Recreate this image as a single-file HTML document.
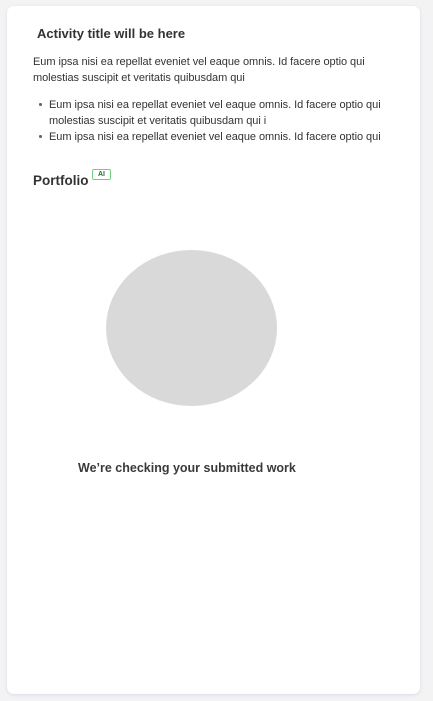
<!DOCTYPE html>
<html><head><meta charset="utf-8"><style>
html,body{margin:0;padding:0;background:#f3f3f4;width:433px;height:701px;overflow:hidden;font-family:"Liberation Sans",sans-serif;color:#333;}
.card{position:absolute;left:7px;top:6px;width:413px;height:688px;background:#fff;border-radius:7px;box-shadow:0 1px 3px rgba(150,140,200,0.25);}
.t{position:absolute;white-space:nowrap;}
.h{font-weight:bold;font-size:13px;color:#333;}
.p{font-size:11px;color:#333;letter-spacing:-0.05px;}
.dot{position:absolute;width:2.5px;height:2.5px;border-radius:50%;background:#666;}
</style></head><body>
<div class="card"></div>
<div class="t h" style="left:37px;top:26px;">Activity title will be here</div>
<div class="t p" style="left:33px;top:56px;">Eum ipsa nisi ea repellat eveniet vel eaque omnis. Id facere optio qui</div>
<div class="t p" style="left:33px;top:72px;">molestias suscipit et veritatis quibusdam qui</div>
<div class="dot" style="left:39px;top:103px;"></div>
<div class="t p" style="left:49px;top:99px;">Eum ipsa nisi ea repellat eveniet vel eaque omnis. Id facere optio qui</div>
<div class="t p" style="left:49px;top:115px;">molestias suscipit et veritatis quibusdam qui i</div>
<div class="dot" style="left:39px;top:135px;"></div>
<div class="t p" style="left:49px;top:131px;">Eum ipsa nisi ea repellat eveniet vel eaque omnis. Id facere optio qui</div>
<div class="t h" style="left:33px;top:173px;font-size:13.5px;">Portfolio</div>
<div class="t" style="left:92px;top:169px;width:17px;height:9px;border:1px solid #6fd27a;border-radius:2px;font-size:7px;line-height:9px;text-align:center;color:#2b6a33;font-weight:bold;">AI</div>
<div style="position:absolute;left:106px;top:250px;width:171px;height:156px;border-radius:50%;background:#d9d9d9;"></div>
<div class="t h" style="left:78px;top:461px;font-size:12.5px;color:#3a3a3a;">We’re checking your submitted work</div>
</body></html>
